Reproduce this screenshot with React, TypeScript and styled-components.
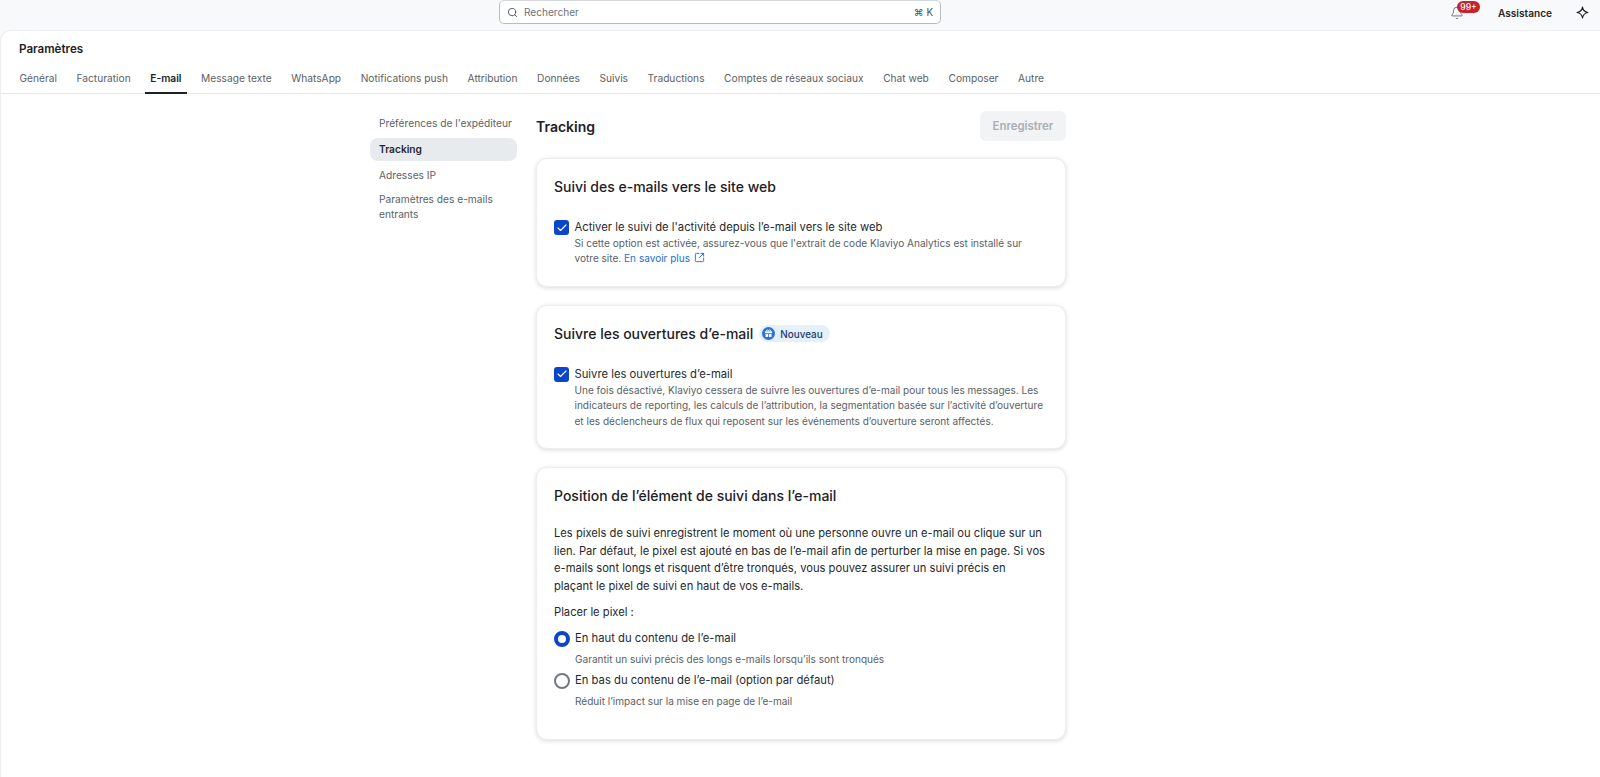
import React from "react";
import styled, { createGlobalStyle } from "styled-components";
import { Search, Bell, SquareArrowOutUpRight, Check } from "lucide-react";

const GlobalStyle = createGlobalStyle`
  html, body {
    margin: 0;
    height: 100%;
    background: #f8f9fb;
    overflow: hidden;
  }
  body {
    font-family: Inter, "Liberation Sans", sans-serif;
    color: #1d2125;
  }
  * {
    box-sizing: border-box;
  }
`;

const Page = styled.div`
  display: flex;
  flex-direction: column;
  height: 777px;
`;

const TopBar = styled.header`
  display: flex;
  align-items: flex-start;
  height: 30px;
  flex: none;
  padding-left: 499px;
`;

const SearchBox = styled.div`
  display: flex;
  align-items: center;
  width: 442px;
  height: 24px;
  padding: 0 7px;
  gap: 6px;
  background: #fff;
  border: 1px solid #b9bdc2;
  border-top-color: #d5d8db;
  border-radius: 5px;
  font-size: 10.1px;
  color: #6d7379;
  svg {
    color: #4d5358;
  }
`;

const Shortcut = styled.span`
  margin-left: auto;
  font-size: 9.8px;
  color: #4d5358;
`;

const TopRight = styled.div`
  display: flex;
  align-items: center;
  margin-left: auto;
  height: 25px;
`;

const BellWrap = styled.div`
  position: relative;
  display: flex;
  width: 14px;
  height: 14px;
  color: #5e6469;
  margin-right: 34px;
`;

const CountBadge = styled.span`
  position: absolute;
  left: 7px;
  top: -5px;
  height: 12px;
  width: 23px;
  border-radius: 7px;
  background: #c9222c;
  color: #fff;
  font-size: 8.6px;
  font-weight: 500;
  line-height: 12px;
  text-align: center;
`;

const HelpLink = styled.span`
  font-size: 10.1px;
  font-weight: 600;
  color: #25292d;
  margin-right: 24px;
`;

const SparkIcon = styled.svg`
  width: 13px;
  height: 13px;
  margin-right: 11px;
  color: #1d2125;
`;

const Panel = styled.main`
  flex: 1;
  background: #fff;
  border: 1px solid #eceef1;
  border-right: none;
  border-bottom: none;
  border-radius: 11px 0 0 0;
`;

const PanelTitle = styled.h1`
  margin: 0;
  padding: 10px 0 0 18px;
  font-size: 11.6px;
  font-weight: 600;
  line-height: 16px;
  color: #1d2125;
`;

const Tabs = styled.nav`
  display: flex;
  height: 37px;
  padding: 0 0 0 13px;
  border-bottom: 1px solid #e6e8ea;
`;

const Tab = styled.a<{ $active?: boolean }>`
  display: flex;
  align-items: center;
  height: 37px;
  padding: 7px 5.4px 0;
  margin-right: 8.8px;
  font-size: 10.2px;
  font-weight: ${({ $active }) => ($active ? 600 : 400)};
  color: ${({ $active }) => ($active ? "#1d2125" : "#5b6166")};
  border-bottom: 2px solid ${({ $active }) => ($active ? "#1d2125" : "transparent")};
  white-space: nowrap;
`;

const Body = styled.div`
  display: flex;
  padding: 17px 0 0 369px;
  gap: 19px;
`;

const SideNav = styled.aside`
  display: flex;
  flex-direction: column;
  width: 147px;
  padding-top: 1px;
`;

const SideItem = styled.a<{ $active?: boolean }>`
  display: block;
  padding: 4px 3px 4px 9px;
  margin-bottom: 3px;
  border-radius: 8px;
  font-size: 10.2px;
  line-height: 15px;
  font-weight: ${({ $active }) => ($active ? 600 : 400)};
  color: ${({ $active }) => ($active ? "#25292d" : "#5b6166")};
  background: ${({ $active }) => ($active ? "#e8ebed" : "transparent")};
`;

const WrappedSideItem = styled(SideItem)`
  line-height: 14.5px;
  margin-top: -2px;
`;

const Content = styled.section`
  display: flex;
  flex-direction: column;
  width: 530px;
  gap: 18px;
`;

const HeadRow = styled.div`
  display: flex;
  align-items: center;
  justify-content: space-between;
  height: 30px;
  margin-bottom: -1px;
`;

const PageTitle = styled.h2`
  margin: 0;
  font-size: 14px;
  font-weight: 600;
  color: #1d2125;
`;

const SaveButton = styled.button`
  width: 86px;
  height: 30px;
  border: none;
  border-radius: 6px;
  background: #f1f3f5;
  color: #a9aeb3;
  font-family: inherit;
  font-size: 11.4px;
  font-weight: 600;
`;

const Card = styled.div`
  padding: 17px 17px 19px;
  background: #fff;
  border: 1px solid #eceef0;
  border-radius: 11px;
  box-shadow: 0 1px 4px rgba(20, 30, 40, 0.16);
`;

const CardTitle = styled.h3`
  display: flex;
  align-items: center;
  gap: 6px;
  margin: 0 0 22px;
  font-size: 14px;
  font-weight: 500;
  line-height: 22px;
  color: #1d2125;
`;

const NewBadge = styled.span`
  display: inline-flex;
  align-items: center;
  gap: 5px;
  height: 17px;
  padding: 0 7px 0 3px;
  border-radius: 9px;
  background: #e4f0fb;
  color: #1b3a70;
  font-size: 9.9px;
  font-weight: 500;
`;

const OptionRow = styled.div`
  display: flex;
  gap: 5.5px;
`;

const CheckBox = styled.span`
  display: flex;
  align-items: center;
  justify-content: center;
  flex: none;
  width: 15px;
  height: 15px;
  border-radius: 3px;
  background: #0b46c8;
  color: #fff;
`;

const OptionLabel = styled.div`
  font-size: 11.25px;
  line-height: 15px;
  color: #25292d;
`;

const OptionHelp = styled.div`
  font-size: 10.05px;
  line-height: 15.4px;
  color: #5b6166;
  margin-top: 1px;
`;

const MoreLink = styled.a`
  color: #1a6fe0;
  svg {
    margin-left: 4px;
    vertical-align: -1px;
  }
`;

const Paragraph = styled.p`
  margin: 0;
  font-size: 11.2px;
  line-height: 17.5px;
  color: #25292d;
`;

const IntroText = styled(Paragraph)`
  margin-top: -4px;
  padding-right: 3px;
`;

const PixelLabel = styled(Paragraph)`
  margin: 9px 0;
`;

const RadioList = styled.div`
  padding-bottom: 5px;
`;

const RadioRow = styled.div`
  display: flex;
  align-items: flex-start;
  gap: 5px;
  height: 42px;
`;

const Radio = styled.span<{ $on?: boolean }>`
  flex: none;
  width: 16px;
  height: 16px;
  border-radius: 50%;
  background: #fff;
  border: ${({ $on }) => ($on ? "4px solid #0b46c8" : "2px solid #74797e")};
`;

const RadioHelp = styled(OptionHelp)`
  margin-top: 6px;
`;

const GiftIcon = () => (
  <svg width="13" height="13" viewBox="0 0 13 13">
    <circle cx="6.5" cy="6.5" r="6.5" fill="#2473e0" />
    <path d="M2.9 4.3h7.2v1.9H2.9z" fill="#fff" />
    <path d="M3.5 6.9h2.6v3.1H3.5zM6.9 6.9h2.6v3.1H6.9z" fill="#fff" />
    <path d="M4.5 4.2c-.5-1.6 1.5-1.9 2-.2.5-1.7 2.5-1.4 2 .2" fill="none" stroke="#fff" strokeWidth="0.9" />
  </svg>
);

const tabs = [
  "Général",
  "Facturation",
  "E-mail",
  "Message texte",
  "WhatsApp",
  "Notifications push",
  "Attribution",
  "Données",
  "Suivis",
  "Traductions",
  "Comptes de réseaux sociaux",
  "Chat web",
  "Composer",
  "Autre",
];

const App: React.FC = () => {
  return (
    <>
      <GlobalStyle />
      <Page>
        <TopBar>
          <SearchBox>
            <Search size={11} strokeWidth={2} />
            <span>Rechercher</span>
            <Shortcut>⌘ K</Shortcut>
          </SearchBox>
          <TopRight>
            <BellWrap>
              <Bell size={14} strokeWidth={1.5} />
              <CountBadge>99+</CountBadge>
            </BellWrap>
            <HelpLink>Assistance</HelpLink>
            <SparkIcon viewBox="0 0 24 24" fill="none" stroke="currentColor" strokeWidth="2.2" strokeLinejoin="round">
              <path d="M12 2c1 6 4 9 10 10-6 1-9 4-10 10-1-6-4-9-10-10 6-1 9-4 10-10z" />
            </SparkIcon>
          </TopRight>
        </TopBar>
        <Panel>
          <PanelTitle>Paramètres</PanelTitle>
          <Tabs>
            {tabs.map((t) => (
              <Tab key={t} $active={t === "E-mail"}>
                {t}
              </Tab>
            ))}
          </Tabs>
          <Body>
            <SideNav>
              <SideItem>Préférences de l'expéditeur</SideItem>
              <SideItem $active>Tracking</SideItem>
              <SideItem>Adresses IP</SideItem>
              <WrappedSideItem>Paramètres des e-mails entrants</WrappedSideItem>
            </SideNav>
            <Content>
              <HeadRow>
                <PageTitle>Tracking</PageTitle>
                <SaveButton>Enregistrer</SaveButton>
              </HeadRow>
              <Card>
                <CardTitle>Suivi des e-mails vers le site web</CardTitle>
                <OptionRow>
                  <CheckBox>
                    <Check size={12} strokeWidth={2.25} />
                  </CheckBox>
                  <div>
                    <OptionLabel>Activer le suivi de l'activité depuis l’e-mail vers le site web</OptionLabel>
                    <OptionHelp>
                      Si cette option est activée, assurez-vous que l'extrait de code Klaviyo Analytics est installé sur
                      <br />
                      votre site.{" "}
                      <MoreLink>
                        En savoir plus
                        <SquareArrowOutUpRight size={11} />
                      </MoreLink>
                    </OptionHelp>
                  </div>
                </OptionRow>
              </Card>
              <Card>
                <CardTitle>
                  Suivre les ouvertures d’e-mail
                  <NewBadge>
                    <GiftIcon />
                    Nouveau
                  </NewBadge>
                </CardTitle>
                <OptionRow>
                  <CheckBox>
                    <Check size={12} strokeWidth={2.25} />
                  </CheckBox>
                  <div>
                    <OptionLabel>Suivre les ouvertures d’e-mail</OptionLabel>
                    <OptionHelp>
                      Une fois désactivé, Klaviyo cessera de suivre les ouvertures d’e-mail pour tous les messages. Les
                      indicateurs de reporting, les calculs de l’attribution, la segmentation basée sur l’activité
                      d’ouverture et les déclencheurs de flux qui reposent sur les événements d’ouverture seront
                      affectés.
                    </OptionHelp>
                  </div>
                </OptionRow>
              </Card>
              <Card>
                <CardTitle>Position de l’élément de suivi dans l’e-mail</CardTitle>
                <IntroText>
                  Les pixels de suivi enregistrent le moment où une personne ouvre un e-mail ou clique sur un lien. Par
                  défaut, le pixel est ajouté en bas de l’e-mail afin de perturber la mise en page. Si vos e-mails sont
                  longs et risquent d’être tronqués, vous pouvez assurer un suivi précis en plaçant le pixel de suivi en
                  haut de vos e-mails.
                </IntroText>
                <PixelLabel>Placer le pixel :</PixelLabel>
                <RadioList>
                  <RadioRow>
                    <Radio $on />
                    <div>
                      <OptionLabel>En haut du contenu de l’e-mail</OptionLabel>
                      <RadioHelp>Garantit un suivi précis des longs e-mails lorsqu’ils sont tronqués</RadioHelp>
                    </div>
                  </RadioRow>
                  <RadioRow>
                    <Radio />
                    <div>
                      <OptionLabel>En bas du contenu de l’e-mail (option par défaut)</OptionLabel>
                      <RadioHelp>Réduit l’impact sur la mise en page de l’e-mail</RadioHelp>
                    </div>
                  </RadioRow>
                </RadioList>
              </Card>
            </Content>
          </Body>
        </Panel>
      </Page>
    </>
  );
};

export default App;
